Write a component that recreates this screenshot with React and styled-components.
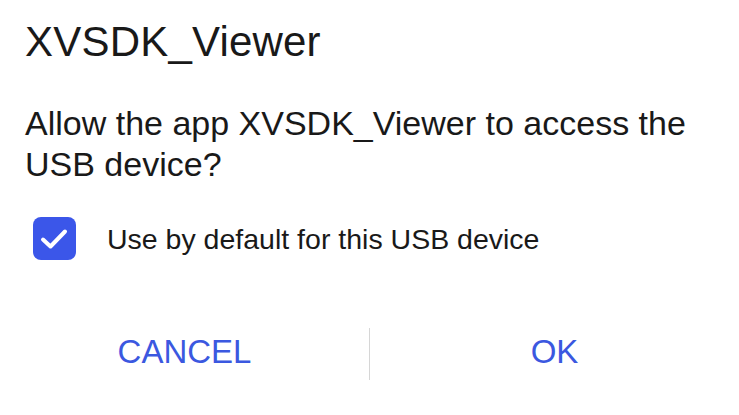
import React, { useState } from "react";
import styled, { createGlobalStyle } from "styled-components";

const GlobalStyle = createGlobalStyle`
  html, body {
    margin: 0;
    padding: 0;
    background: #fff;
  }
  body {
    font-family: "Liberation Sans", Arial, sans-serif;
    color: #191919;
  }
`;

const Dialog = styled.div`
  width: 739px;
  height: 415px;
  box-sizing: border-box;
  display: flex;
  flex-direction: column;
  padding: 16px 25px 0 25px;
  background: #fff;
`;

const Title = styled.h1`
  margin: 0;
  font-size: 42px;
  font-weight: 400;
  line-height: 52px;
  letter-spacing: 0.2px;
`;

const Message = styled.p`
  margin: 35px 0 0 0;
  font-size: 34px;
  line-height: 41px;
  font-weight: 400;
`;

const CheckRow = styled.label`
  display: flex;
  align-items: center;
  gap: 31px;
  margin: 32px 0 0 8px;
  cursor: pointer;
`;

const Box = styled.span`
  width: 43px;
  height: 43px;
  border-radius: 8px;
  box-sizing: border-box;
  background: ${(p) => (p.checked ? "#3b56e9" : "#fff")};
  border: ${(p) => (p.checked ? "none" : "2px solid #888")};
  display: flex;
  align-items: center;
  justify-content: center;
  flex-shrink: 0;
`;

const CheckLabel = styled.span`
  font-size: 28.5px;
  line-height: 34px;
`;

const Actions = styled.div`
  display: flex;
  align-items: center;
  margin: 68px -25px 0 -25px;
  height: 52px;
`;

const Action = styled.button`
  flex: 1;
  background: none;
  border: none;
  font-family: "Liberation Sans", Arial, sans-serif;
  font-size: 33px;
  color: #3b58e0;
  padding: 0 0 4px 0;
  cursor: pointer;
`;

const Divider = styled.span`
  width: 1px;
  height: 52px;
  background: #d6d6d6;
`;

export default function App() {
  const [checked, setChecked] = useState(true);
  return (
    <>
      <GlobalStyle />
      <Dialog>
        <Title>XVSDK_Viewer</Title>
        <Message>Allow the app XVSDK_Viewer to access the USB device?</Message>
        <CheckRow onClick={() => setChecked(!checked)}>
          <Box checked={checked}>
            {checked && (
              <svg width="43" height="43" viewBox="0 0 43 43">
                <path
                  d="M10 22.5 L17.5 29.5 L32 14.5"
                  fill="none"
                  stroke="#fff"
                  strokeWidth="4"
                  strokeLinecap="round"
                  strokeLinejoin="round"
                />
              </svg>
            )}
          </Box>
          <CheckLabel>Use by default for this USB device</CheckLabel>
        </CheckRow>
        <Actions>
          <Action>CANCEL</Action>
          <Divider />
          <Action>OK</Action>
        </Actions>
      </Dialog>
    </>
  );
}
